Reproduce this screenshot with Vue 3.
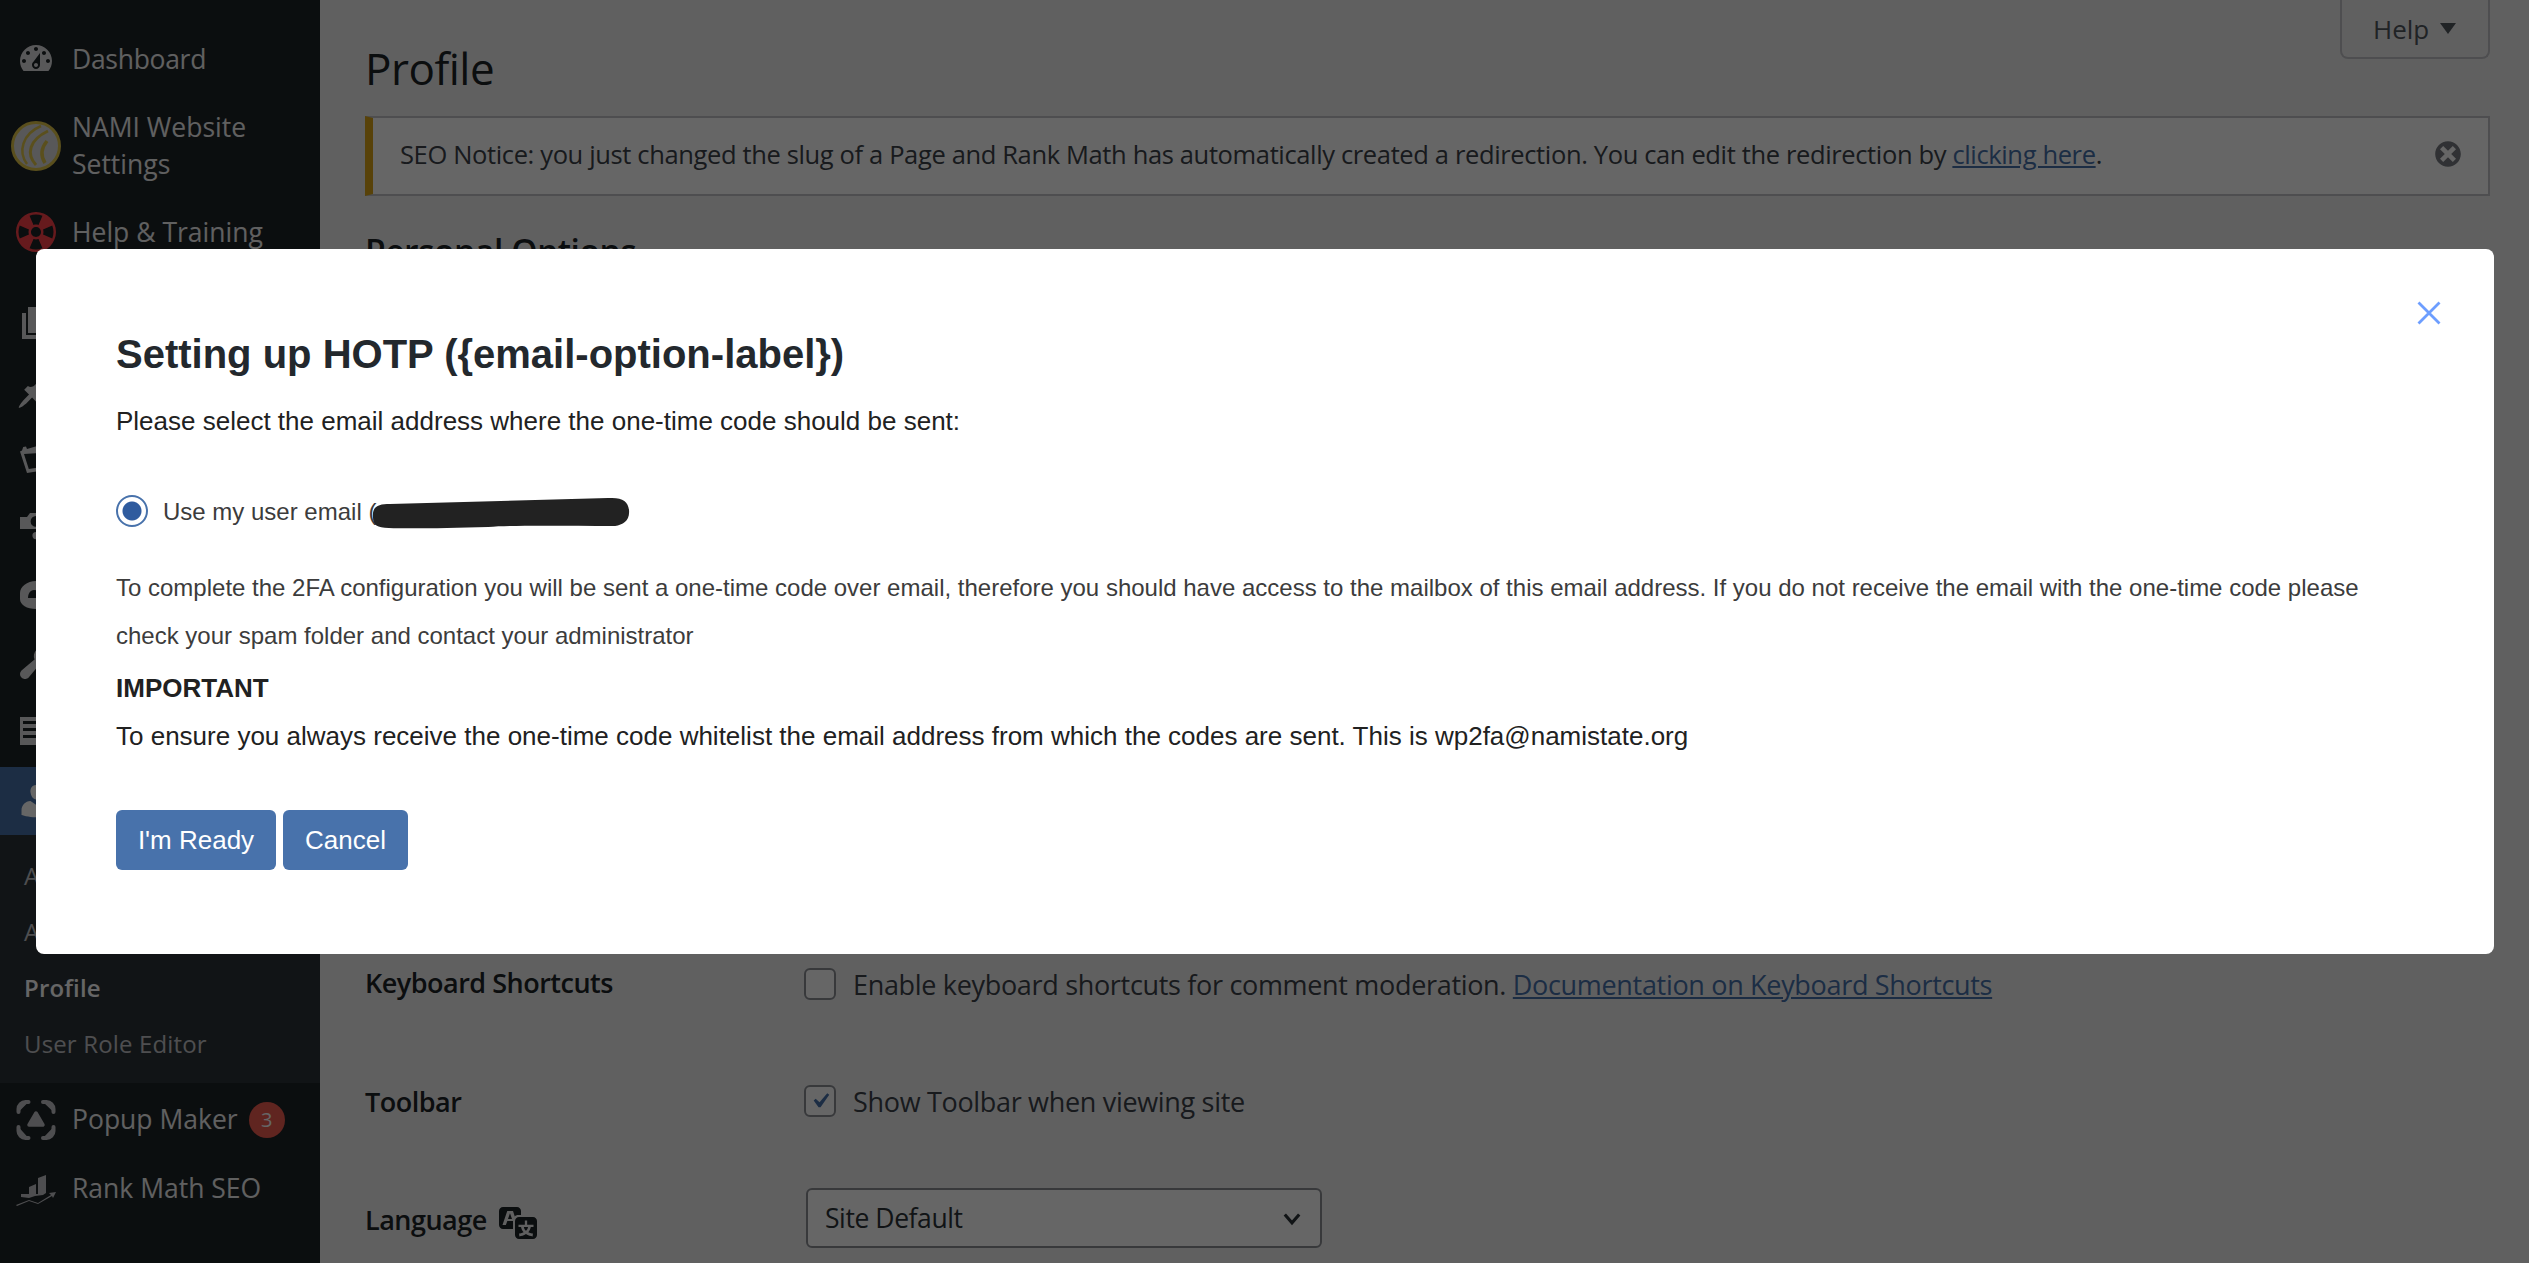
<script setup>
const paths = {
  dash: 'M3.76 16h12.48c1.1-1.37 1.76-3.11 1.76-5 0-4.42-3.58-8-8-8s-8 3.58-8 8c0 1.89.66 3.63 1.76 5zM10 4c.55 0 1 .45 1 1s-.45 1-1 1-1-.45-1-1 .45-1 1-1zM6 6c.55 0 1 .45 1 1s-.45 1-1 1-1-.45-1-1 .45-1 1-1zm8 0c.55 0 1 .45 1 1s-.45 1-1 1-1-.45-1-1 .45-1 1-1zm-5.37 5.55L12 7v6c0 1.1-.9 2-2 2s-2-.9-2-2c0-.57.24-1.08.63-1.45zM4 10c.55 0 1 .45 1 1s-.45 1-1 1-1-.45-1-1 .45-1 1-1zm12 0c.55 0 1 .45 1 1s-.45 1-1 1-1-.45-1-1 .45-1 1-1zm-5 3c0-.55-.45-1-1-1s-1 .45-1 1 .45 1 1 1 1-.45 1-1z',
  page: 'M6 15V2h10v13H6zm-1 1h8v2H3V5h2v11z',
  post: 'M10.44 3.02l1.82-1.82 6.36 6.35-1.83 1.82c-1.05-.68-2.48-.57-3.41.36l-.75.75c-.92.93-1.04 2.35-.35 3.41l-1.83 1.82-2.41-2.41-2.8 2.79c-.42.42-3.38 2.71-3.8 2.29s1.86-3.39 2.28-3.81l2.79-2.79L4.1 9.36l1.83-1.82c1.05.69 2.48.57 3.4-.36l.75-.75c.93-.92 1.05-2.35.36-3.41z',
  cal: 'M2 6.200L3 5.800 3.600 4l1.400-.3.5 1.300 9-2.600.9 2.400L17 4.400 18 15 5.500 17 2 6.200zM4 7.500L6.400 15 16 13.500 15.600 6.800 4 7.500z',
  cam: 'M2 11V5h3.500l1.500-2h5l1.500 2H18v6H2zM10 4.500a2.700 2.700 0 1 0 0 5.400 2.700 2.700 0 0 0 0-5.400zM10 12.500a1.800 1.800 0 1 1 0 3.600 1.800 1.800 0 0 1 0-3.600z',
  shield: 'M2 9c0-3 3.500-6 8-6s8 3 8 6v3c0 2.500-4 5-8 5-4.500 0-8-2-8-5V9zM6 11.500h6.500v-1.800C12 8.300 10.500 7.500 9 7.500 7 7.500 6 9.500 6 11.500z',
  tools: 'M16.68 9.77c-1.34 1.34-3.3 1.67-4.95.99l-5.41 6.52c-.99.99-2.59.99-3.58 0s-.99-2.59 0-3.57l6.52-5.42c-.68-1.65-.35-3.61.99-4.95 1.28-1.28 3.12-1.62 4.72-1.06l-2.89 2.89 2.82 2.82 2.86-2.87c.53 1.58.18 3.39-1.08 4.67z',
  table: 'M2 3h16v14H2V3zm1.500 2v1.500h13V5h-13zm0 3.500V10h13V8.500h-13zm0 3.500v1.500h13V12h-13z',
  users: 'M10 9.25c-2.27 0-2.73-3.44-2.73-3.44C7 4.020 7.820 2 9.970 2c2.160 0 2.980 2.020 2.710 3.810 0 0-.41 3.440-2.680 3.440zm0 2.570L12.720 10c2.390 0 4.520 2.330 4.520 4.530v2.490s-3.650 1.130-7.240 1.130c-3.650 0-7.240-1.130-7.240-1.130v-2.490c0-2.250 1.940-4.480 4.470-4.480z'
}
const hiddenIcons = ['page', 'post', 'cal', 'cam', 'shield', 'tools', 'table']
const sub = [
  { label: 'All Users' },
  { label: 'Add New' },
  { label: 'Profile', on: true },
  { label: 'User Role Editor' }
]
</script>

<template>
  <div class="page">
    <aside class="side">
      <div class="item dash-item">
        <svg class="ico" viewBox="0 0 20 20"><path :d="paths.dash" /></svg>
        <span>Dashboard</span>
      </div>
      <div class="item tall">
        <svg class="ico logo" viewBox="0 0 50 50" fill="none" stroke="#e0c64a">
          <circle cx="25" cy="25" r="23.500" stroke-width="3" />
          <path d="M16 43C7 31 11 13 30 5" stroke-width="2.500" />
          <path d="M25 44C15 33 18 19 37 10" stroke-width="3" />
          <path d="M34 42C29 34 31 26 36 20" stroke-width="3.500" />
        </svg>
        <span>NAMI Website<br />Settings</span>
      </div>
      <div class="item">
        <svg class="ico sos" viewBox="2 2 16 16"><path transform="rotate(45 10 10)" d="M18 10c0-4.420-3.580-8-8-8s-8 3.580-8 8 3.580 8 8 8 8-3.580 8-8zM7.230 3.570L8.720 7.300c-.62.290-1.130.800-1.420 1.420L3.570 7.230c.710-1.640 2.020-2.950 3.660-3.660zm9.200 3.660L12.700 8.720c-.290-.62-.800-1.130-1.420-1.420l1.490-3.730c1.640.710 2.950 2.020 3.660 3.660zM10 12c-1.100 0-2-.9-2-2s.9-2 2-2 2 .9 2 2-.9 2-2 2zm-6.430.770l3.730-1.490c.290.620.800 1.130 1.420 1.420l-1.490 3.730c-1.640-.710-2.950-2.020-3.660-3.660zm9.200 3.660l-1.490-3.730c.620-.290 1.130-.800 1.420-1.420l3.730 1.490c-.710 1.640-2.020 2.950-3.660 3.660z" /></svg>
        <span>Help &amp; Training</span>
      </div>
      <div class="sep"></div>
      <div v-for="n in hiddenIcons" :key="n" class="item">
        <svg class="ico" viewBox="0 0 20 20"><path :d="paths[n]" fill-rule="evenodd" /></svg>
      </div>
      <div class="item current">
        <svg class="ico white" viewBox="0 0 20 20"><path :d="paths.users" /></svg>
        <span>Users</span>
      </div>
      <ul class="submenu">
        <li v-for="s in sub" :key="s.label" :class="{ on: s.on }">{{ s.label }}</li>
      </ul>
      <div class="item popup">
        <svg class="ico dim" viewBox="0 0 40 40" fill="none" stroke="#c3c4c7" stroke-width="4" stroke-linecap="round">
          <path d="M2.500 12V9a7 7 0 0 1 7-7h3M27 2h3.500a7 7 0 0 1 7 7v3M37.500 27v4a7 7 0 0 1-7 7H27M12.500 38h-3a7 7 0 0 1-7-7v-4" />
          <path d="M20 13l7 12h-14z" stroke-linejoin="round" stroke-width="3.500" />
        </svg>
        <span>Popup Maker</span>
        <b class="badge">3</b>
      </div>
      <div class="item">
        <svg class="ico dim" viewBox="0 0 40 40"><path d="M5 26h8v-7l7-3v10h2V10l8-3v18l-3 2-8 1-6 2-8-1zM0 37l13-5 9 3 13-8-2-2 7-1-3 6-1-2-14 8-9-3-12 5z" /></svg>
        <span>Rank Math SEO</span>
      </div>
    </aside>

    <main class="main">
      <div class="help-row">
        <div class="help">Help <i class="tri"></i></div>
      </div>
      <h1>Profile</h1>
      <div class="notice">
        <p>SEO Notice: you just changed the slug of a Page and Rank Math has automatically created a redirection. You can edit the redirection by <a>clicking here</a>.</p>
        <svg class="dismiss" viewBox="0 0 20 20"><path d="M10 2c4.420 0 8 3.580 8 8s-3.580 8-8 8-8-3.580-8-8 3.580-8 8-8zm5 11l-3-3 3-3-2-2-3 3-3-3-2 2 3 3-3 3 2 2 3-3 3 3z" /></svg>
      </div>
      <h2>Personal Options</h2>
      <div class="rows">
        <div class="row">
          <label class="raised">Keyboard Shortcuts</label>
          <div class="field"><i class="check"></i><span>Enable keyboard shortcuts for comment moderation. <a>Documentation on Keyboard Shortcuts</a></span></div>
        </div>
        <div class="row">
          <label>Toolbar</label>
          <div class="field">
            <i class="check"><svg viewBox="0 0 20 20"><path d="M14.830 4.890l1.340.940-5.810 8.380H9.020L5.780 9.670l1.340-1.250 2.570 2.400z" /></svg></i>
            <span>Show Toolbar when viewing site</span>
          </div>
        </div>
        <div class="row">
          <label class="lang">Language
            <svg viewBox="0 0 20 20"><path d="M11 7H9.490c-.63 0-1.250.3-1.590.7L7 5H4.130l-2.390 7h1.690l.74-2H7v4H2c-1.100 0-2-.9-2-2V5c0-1.100.9-2 2-2h7c1.100 0 2 .9 2 2v2zM6.510 9H4.490l1-2.930zM10 8h7c1.100 0 2 .9 2 2v7c0 1.100-.9 2-2 2h-7c-1.100 0-2-.9-2-2v-7c0-1.100.9-2 2-2zm7.250 5v-1.080h-3.170V9.750h-1.160v2.170H9.750V13h1.280c.110.850.560 1.850 1.280 2.620-.870.360-1.890.620-2.310.620-.010.020.220.970.2 1.460.840 0 2.210-.5 3.280-1.150 1.090.650 2.480 1.150 3.340 1.150-.020-.49.2-1.440.2-1.460-.43 0-1.490-.27-2.380-.63.700-.770 1.140-1.770 1.250-2.610h1.360zm-3.810 1.930c-.5-.46-.850-1.130-1.010-1.930h2.090c-.170.800-.510 1.470-1 1.930l-.04.030s-.030-.020-.04-.030z" /></svg>
          </label>
          <div class="select">
            <span>Site Default</span>
            <svg viewBox="0 0 20 20" fill="none" stroke="#2c3338" stroke-width="2.600"><path d="M4 7l6 7 6-7" /></svg>
          </div>
        </div>
      </div>
    </main>

    <div class="overlay"></div>

    <section class="modal">
      <svg class="close" viewBox="0 0 24 24" fill="none" stroke="#6d9eff" stroke-width="2.800"><path d="M1.500 1.500l21 21M22.500 1.500l-21 21" /></svg>
      <h3>Setting up HOTP ({email-option-label})</h3>
      <p class="lead">Please select the email address where the one-time code should be sent:</p>
      <div class="choice">
        <i class="radio"></i>
        <span class="choice-label">Use my user email (</span>
        <svg class="scribble" viewBox="0 0 262 32"><path d="M3 20C2 9 9 7 20 7L240 1c14-1 20 3 21 12 1 11-6 15-14 16-50 0-100-1-128 1-40 1-80 2-100 1C7 31 3 28 3 20z" /></svg>
      </div>
      <p class="small first">To complete the 2FA configuration you will be sent a one-time code over email, therefore you should have access to the mailbox of this email address. If you do not receive the email with the one-time code please check your spam folder and contact your administrator</p>
      <p class="strong">IMPORTANT</p>
      <p class="last">To ensure you always receive the one-time code whitelist the email address from which the codes are sent. This is wp2fa@namistate.org</p>
      <div class="actions">
        <button class="ready">I'm Ready</button>
        <button class="cancel">Cancel</button>
      </div>
    </section>
  </div>
</template>

<style>
html, body { margin: 0; background: #f0f0f1; overflow: hidden; }
</style>

<style scoped>
.page {
  position: relative;
  display: flex;
  width: 2529px;
  height: 1263px;
  overflow: hidden;
  background: #f0f0f1;
  font-family: "Open Sans", "Noto Sans", sans-serif;
  color: #1d2327;
}
.side {
  flex: 0 0 320px;
  height: 100%;
  box-sizing: border-box;
  padding-top: 25px;
  background: #1d2327;
  color: #f0f0f1;
  font-size: 26.500px;
  letter-spacing: 0;
}
.item {
  display: flex;
  align-items: center;
  gap: 16px;
  height: 68px;
  padding-left: 16px;
  line-height: 37px;
}
.item.tall { height: 105px; }
.dash-item { letter-spacing: -0.3px; }
.item.current { margin-top: 2px; background: #4872ab; color: #fff; }
.ico { flex: 0 0 40px; width: 40px; height: 40px; fill: #dcdcde; }
.ico.white { fill: #fff; }
.ico.dim { fill: #c3c4c7; }
.logo { margin-left: -5px; margin-right: -5px; flex-basis: 50px; width: 50px; height: 50px; }
.sos { fill: #ff4149; }
.sep { height: 23px; }
.submenu {
  list-style: none;
  margin: 0;
  padding: 13px 0 11px 24px;
  background: #2c3338;
  color: #c3c4c7;
  font-size: 24px;
  letter-spacing: 0.15px;
}
.submenu li { height: 56px; line-height: 56px; }
.submenu li.on { color: #fff; font-weight: 600; }
.popup { height: 71px; position: relative; padding-top: 2px; box-sizing: border-box; }
.badge {
  flex: 0 0 36px;
  height: 36px;
  margin-left: -5px;
  border-radius: 50%;
  background: #ef5c50;
  color: #fff;
  font-size: 20px;
  font-weight: 400;
  line-height: 36px;
  text-align: center;
}
.main { flex: 1; padding: 0 39px 0 45px; min-width: 0; }
.help-row { display: flex; justify-content: flex-end; height: 59px; }
.help {
  box-sizing: border-box;
  display: flex;
  align-items: center;
  gap: 11px;
  width: 150px;
  height: 59px;
  padding: 0 0 0 31px;
  background: #f0f0f1;
  border: 2px solid #c3c4c7;
  border-top: 0;
  border-radius: 0 0 8px 8px;
  color: #50575e;
  font-size: 26px;
}
.tri {
  width: 0;
  height: 0;
  border-left: 8px solid transparent;
  border-right: 8px solid transparent;
  border-top: 11px solid #50575e;
  margin-top: 0;
}
h1 {
  margin: -22px 0 0;
  height: 79px;
  font-size: 44px;
  font-weight: 400;
  line-height: 62px;
  letter-spacing: -0.5px;
}
.notice {
  box-sizing: border-box;
  display: flex;
  align-items: center;
  justify-content: space-between;
  height: 80px;
  padding: 0 24px 4px 27px;
  background: #fff;
  border: 2px solid #c3c4c7;
  border-left: 8px solid #dba617;
  color: #3c434a;
}
.notice p { margin: 0; font-size: 25.500px; letter-spacing: -0.36px; white-space: nowrap; }
a { color: #4872ab; text-decoration: underline; }
.dismiss { width: 32px; height: 32px; fill: #787c82; }
h2 { margin: 33px 0 0; font-size: 33.500px; font-weight: 600; line-height: 44px; height: 703px; letter-spacing: -0.4px; }
.rows { margin-top: -8px; }
.row { display: flex; align-items: center; height: 120px; margin-bottom: -3px; }
.row label { flex: 0 0 439px; font-size: 27px; font-weight: 600; letter-spacing: -0.5px; }
.row label.raised { margin-top: -3px; }
.lang { display: flex; align-items: center; gap: 12px; margin-top: 2px; }
.lang svg { width: 40px; height: 40px; fill: #1d2327; margin-top: 4px; }
.field { display: flex; align-items: center; gap: 17px; font-size: 27px; color: #3c434a; letter-spacing: -0.32px; }
.check {
  box-sizing: border-box;
  display: block;
  flex: 0 0 32px;
  width: 32px;
  height: 32px;
  background: #fff;
  border: 2px solid #8c8f94;
  border-radius: 6px;
}
.check svg { display: block; width: 30px; height: 30px; margin: -1px; fill: #4872ab; }
.select {
  box-sizing: border-box;
  display: flex;
  align-items: center;
  justify-content: space-between;
  width: 516px;
  height: 60px;
  margin-left: 2px;
  padding: 0 16px 0 17px;
  background: #fff;
  border: 2px solid #8c8f94;
  border-radius: 6px;
  font-size: 26.500px;
  color: #2c3338;
  letter-spacing: -0.42px;
}
.select svg { width: 24px; height: 24px; }
.overlay { position: absolute; inset: 0; background: rgba(0, 0, 0, 0.6); }
.modal {
  position: absolute;
  left: 36px;
  top: 249px;
  box-sizing: border-box;
  width: 2458px;
  height: 705px;
  padding: 79px 80px 0;
  background: #fff;
  border-radius: 8px;
  font-family: "Liberation Sans", Arial, sans-serif;
  color: #212121;
}
.close { position: absolute; right: 53px; top: 52px; width: 24px; height: 24px; }
h3 { margin: 0; font-size: 40px; font-weight: 700; line-height: 52px; color: #23282d; }
.lead { margin: 26px 0 0; font-size: 26px; line-height: 30px; }
.choice { display: flex; align-items: center; height: 36px; margin-top: 57px; font-size: 24px; color: #3c3c3c; }
.choice-label { padding-top: 2px; }
.radio {
  box-sizing: border-box;
  flex: 0 0 32px;
  width: 32px;
  height: 32px;
  margin-right: 15px;
  border: 2px solid #4872ab;
  border-radius: 50%;
  background: radial-gradient(circle, #2f5b9e 0 9px, #fff 10px);
}
.scribble { width: 260px; height: 32px; margin: 4px 0 0 -6px; fill: #222; }
.small { margin: 0; font-size: 24px; line-height: 48px; color: #3c3c3c; }
.first { margin-top: 35px; }
.strong { margin: 13px 0 0; font-size: 26px; font-weight: 700; line-height: 30px; }
.last { margin: 18px 0 0; font-size: 26px; line-height: 30px; }
.actions { display: flex; gap: 7px; margin-top: 59px; }
button {
  box-sizing: border-box;
  height: 60px;
  padding: 0;
  border: 0;
  border-radius: 6px;
  background: #4872ab;
  color: #fff;
  font: 26px "Liberation Sans", Arial, sans-serif;
}
.ready { width: 160px; }
.cancel { width: 125px; }
</style>
